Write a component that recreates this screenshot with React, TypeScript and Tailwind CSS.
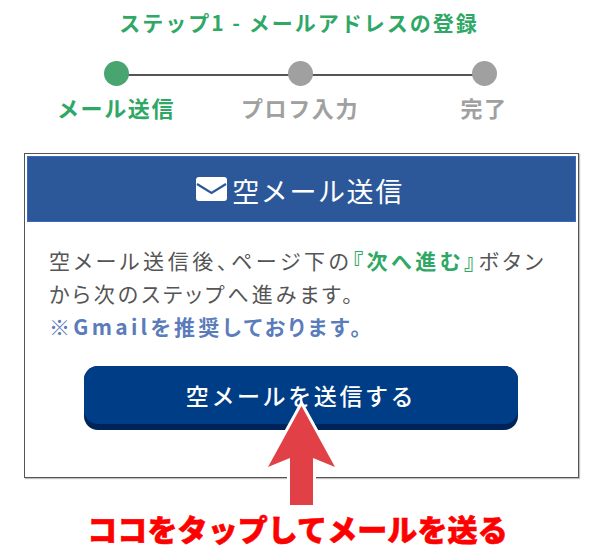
import React from 'react';

const cjk = 'font-["Noto_Sans_CJK_JP","Noto_Sans",sans-serif]';

function Step({ label, active }: { label: string; active?: boolean }) {
  return (
    <div className="w-[184px] flex flex-col items-center">
      <div className={`w-[25px] h-[25px] rounded-full ${active ? 'bg-[#49a570]' : 'bg-[#a0a0a0]'}`}></div>
      <div className={`mt-[6px] text-[22px] leading-[30px] font-bold tracking-[1.6px] whitespace-nowrap ${active ? 'text-[#2fa866]' : 'text-[#a0a0a0]'}`}>
        {label}
      </div>
    </div>
  );
}

export default function App() {
  return (
    <div className={`relative w-[600px] h-[555px] overflow-hidden bg-white ${cjk}`}>
      <h1 className="pt-[7px] pr-[2px] text-center text-[21px] leading-[30px] font-bold tracking-[2px] text-[#2fa866]">
        ステップ1 - メールアドレスの登録
      </h1>

      <div className="mt-[24px] flex justify-center relative">
        <div className="absolute left-[116px] top-[13px] w-[368px] h-[2px] bg-[#555]"></div>
        <div className="relative flex">
          <Step label="メール送信" active />
          <Step label="プロフ入力" />
          <Step label="完了" />
        </div>
      </div>

      <div className="ml-[24px] w-[555px] mt-[31px] h-[325px] border border-[#555] p-[2px] shadow-[1px_1px_1px_rgba(0,0,0,0.25)]">
        <div className="h-[66px] pr-[3px] bg-[#2c5899] border border-[#3a6ac0] flex items-center justify-center gap-[5px] text-white">
          <svg width="31" height="24" viewBox="0 0 31 24">
            <rect x="0" y="0" width="31" height="24" rx="3" fill="#fff" />
            <path d="M1 7 L15.5 16 L30 7" fill="none" stroke="#2c5899" strokeWidth="2.2" />
          </svg>
          <span className="mt-[4px] text-[27px] leading-[36px] font-normal tracking-[1.6px]">空メール送信</span>
        </div>
        <div className="px-[22px] pt-[22px] text-[21px] leading-[33px] font-normal text-[#555] tracking-[3.1px] whitespace-nowrap [font-feature-settings:'palt']">
          <p>
            <span className="tracking-[3.6px]">
              空メール送信後、ページ下の<span className="text-[#2fa866] font-bold">『次へ進む』</span>ボタン
            </span>
            <br />
            から次のステップへ進みます。
          </p>
          <p className="text-[#5b7cba] font-bold tracking-[3.3px]">※Gmailを推奨しております。</p>
        </div>
        <div className="ml-[57px] w-[434px] mt-[23px] h-[64px] pb-[6px] rounded-[14px] bg-[#002359]">
          <div className="h-full rounded-[14px] bg-[#003d87] flex items-center justify-center text-white text-[23px] font-medium tracking-[2.6px]">
            空メールを送信する
          </div>
        </div>
      </div>

      <svg className="absolute left-[262px] top-[400px]" width="80" height="106" viewBox="0 0 80 106">
        <path d="M39.5 6 L73 67 L51 58 L51 105 L28 105 L28 58 L6 67 Z" fill="#e14146" stroke="#fff" strokeWidth="6" />
        <path d="M39.5 6 L73 67 L51 58 L51 105 L28 105 L28 58 L6 67 Z" fill="#e14146" />
      </svg>

      <div className="absolute left-0 right-[5px] top-[508px] text-center text-[30px] leading-[40px] font-black tracking-[0.1px] text-[#f00] [-webkit-text-stroke:0.6px_#f00]">
        ココをタップしてメールを送る
      </div>
    </div>
  );
}
